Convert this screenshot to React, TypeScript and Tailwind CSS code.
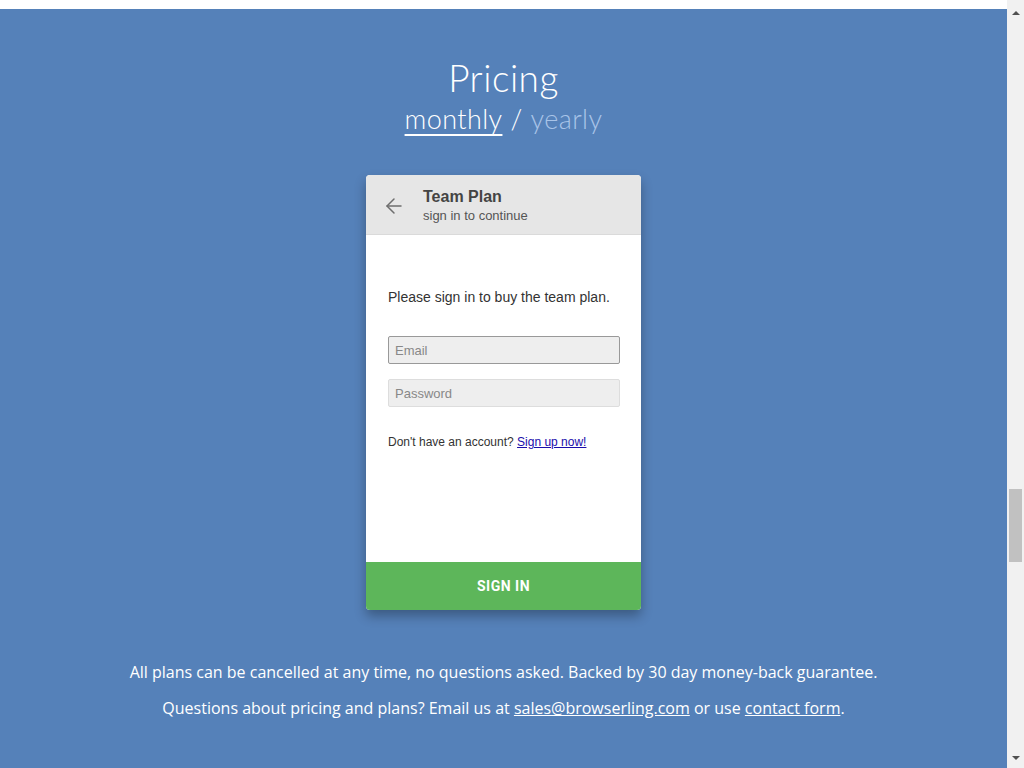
import { ArrowLeft } from "lucide-react";

export default function App() {
    return (
        <div className="flex h-[768px] w-[1024px] overflow-hidden bg-[#5581b9]">
            <div className="flex-1 flex flex-col">
                {/* top of fixed nav */}
                <div className="h-[9px] bg-white" />

                <div className="flex flex-col items-center text-white">
                    <h1 className="mt-[47px] text-[37px] font-light leading-[44px] font-['Lato',sans-serif] tracking-[0.5px]">
                        Pricing
                    </h1>
                    <div className="mt-[3px] text-[27px] leading-[32px] font-['Lato',sans-serif] font-light tracking-[0.4px]">
                        <span className="underline underline-offset-[5px] decoration-[2px]">monthly</span>
                        <span className="mx-[8px]">/</span>
                        <span className="text-[#a9c4e8]">yearly</span>
                    </div>

                    {/* Card */}
                    <div className="mt-[40px] w-[275px] h-[435px] flex flex-col rounded-[4px] overflow-hidden bg-white shadow-[0_6px_12px_rgba(0,0,0,0.3)] font-['Liberation_Sans',Arial,sans-serif]">
                        <div className="h-[60px] bg-[#e6e6e6] flex border-b border-[#dadada]">
                            <ArrowLeft className="ml-[16px] mt-[2px] self-center text-[#6e6e6e]" size={24} strokeWidth={1.5} />
                            <div className="ml-[17px] pt-[12px] flex flex-col">
                                <span className="text-[16px] font-bold text-[#444] leading-[20px]">Team Plan</span>
                                <span className="mt-[1px] text-[13px] text-[#555] leading-[16px]">sign in to continue</span>
                            </div>
                        </div>

                        <div className="flex-1 pl-[22px] pr-[21px] text-[#333]">
                            <p className="mt-[54px] text-[14px] leading-[17px]">Please sign in to buy the team plan.</p>
                            <input
                                className="mt-[30px] w-full h-[28px] px-[6px] text-[13px] bg-[#eeeeee] border border-[#999] rounded-[2px] outline-none placeholder:text-[#888]"
                                placeholder="Email"
                            />
                            <input
                                className="mt-[15px] w-full h-[28px] px-[6px] text-[13px] bg-[#eeeeee] border border-[#ddd] rounded-[2px] outline-none placeholder:text-[#888]"
                                placeholder="Password"
                            />
                            <p className="mt-[28px] text-[12px] leading-[14px] text-[#333]">
                                Don't have an account?{" "}
                                <a className="text-[#1a0dab] underline" href="#">Sign up now!</a>
                            </p>
                        </div>

                        <button className="h-[48px] bg-[#5db65a] text-white text-[14px] font-bold tracking-[0.5px] font-['Roboto',sans-serif]">
                            SIGN IN
                        </button>
                    </div>

                    <div className="mt-[50px] text-[16px] leading-[24px] font-['Open_Sans',sans-serif] text-center">
                        <p>All plans can be cancelled at any time, no questions asked. Backed by 30 day money-back guarantee.</p>
                        <p className="mt-[12px]">
                            Questions about pricing and plans? Email us at{" "}
                            <a className="underline" href="#">sales@browserling.com</a> or use{" "}
                            <a className="underline" href="#">contact form</a>.
                        </p>
                    </div>
                </div>
            </div>

            {/* Scrollbar */}
            <div className="w-[17px] bg-[#f1f1f1] flex flex-col items-center">
                <div className="h-[17px] flex items-end justify-center pb-[2px]">
                    <div className="w-0 h-0 border-l-[4px] border-r-[4px] border-b-[4px] border-l-transparent border-r-transparent border-b-[#505050]" />
                </div>
                <div className="mt-[472px] w-[13px] h-[73px] bg-[#c1c1c1]" />
                <div className="mt-auto h-[17px] flex items-start justify-center pt-[5px]">
                    <div className="w-0 h-0 border-l-[4px] border-r-[4px] border-t-[4px] border-l-transparent border-r-transparent border-t-[#505050]" />
                </div>
            </div>
        </div>
    );
}
